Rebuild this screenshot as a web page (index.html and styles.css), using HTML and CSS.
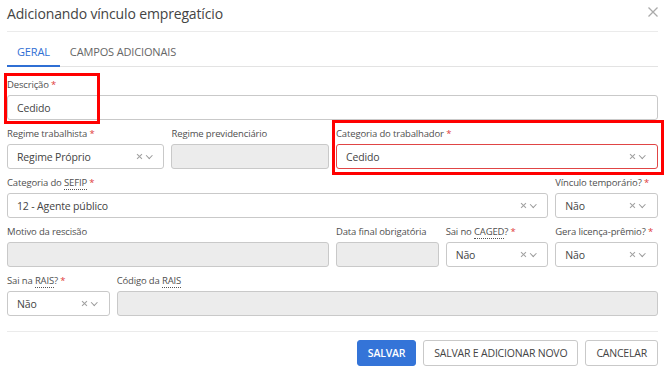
FILE: index.html
```html
<html><head>
<title>Adicionando vínculo empregatício</title>
<link rel="stylesheet" href="styles.css">
</head><body>

<div class="modal">
<div class="head">
<div class="title">Adicionando vínculo empregatício</div>
<svg class="close" width="10" height="10" viewBox="0 0 10 10"><path d="M0.5 0.5L9.5 9.5M9.5 0.5L0.5 9.5" stroke="#aaa" stroke-width="1.3"/></svg>
</div>

<div class="tabs">
<div class="tab active">GERAL</div>
<div class="tab">CAMPOS ADICIONAIS</div>
</div>

<div class="form">
<div class="field c12"><label>Descrição <b>*</b></label><div class="box">Cedido</div></div>

<div class="field c3"><label>Regime trabalhista <b>*</b></label><div class="box sel"><span>Regime Próprio</span><i class="x"></i><i class="dd"></i></div></div>
<div class="field c3"><label>Regime previdenciário</label><div class="box off"></div></div>
<div class="field c6"><label>Categoria do trabalhador <b>*</b></label><div class="box sel err"><span>Cedido</span><i class="x"></i><i class="dd"></i></div></div>

<div class="field c10"><label>Categoria do <abbr>SEFIP</abbr> <b>*</b></label><div class="box sel"><span>12 - Agente público</span><i class="x"></i><i class="dd"></i></div></div>
<div class="field c2"><label>Vínculo temporário? <b>*</b></label><div class="box sel"><span>Não</span><i class="x"></i><i class="dd"></i></div></div>

<div class="field c6"><label>Motivo da rescisão</label><div class="box off"></div></div>
<div class="field c2"><label>Data final obrigatória</label><div class="box off"></div></div>
<div class="field c2"><label>Sai no <abbr>CAGED</abbr>? <b>*</b></label><div class="box sel"><span>Não</span><i class="x"></i><i class="dd"></i></div></div>
<div class="field c2"><label>Gera licença-prêmio? <b>*</b></label><div class="box sel"><span>Não</span><i class="x"></i><i class="dd"></i></div></div>

<div class="field c2"><label>Sai na <abbr>RAIS</abbr>? <b>*</b></label><div class="box sel"><span>Não</span><i class="x"></i><i class="dd"></i></div></div>
<div class="field c10"><label>Código da <abbr>RAIS</abbr></label><div class="box off"></div></div>
</div>

<div class="foot">
<div class="btn primary">SALVAR</div>
<div class="btn">SALVAR E ADICIONAR NOVO</div>
<div class="btn">CANCELAR</div>
</div>
</div>

<div class="mark mark1"></div>
<div class="mark mark2"></div>
</body></html>
```

FILE: styles.css
```css
body{margin:0;background:#fff;font-family:"Open Sans",sans-serif;color:#444;}
.modal{padding:0 10px 0 7px;}

.head{display:flex;align-items:center;justify-content:space-between;height:31px;border-bottom:1px solid #ebebeb;}
.title{font-size:14px;letter-spacing:-0.15px;color:#444;padding-bottom:5px;}
.close{margin-bottom:7px;}

.tabs{display:flex;border-bottom:1px solid #e3e3e3;}
.tab{padding:12px 10px 5px;font-size:11px;letter-spacing:-0.15px;line-height:16px;color:#666;border-bottom:2px solid transparent;margin-bottom:-1px;}
.tab.active{color:#2f6fd4;border-bottom-color:#2f6fd4;}

.form{display:grid;grid-template-columns:repeat(12,1fr);gap:7px;padding:11px 0 15px;border-bottom:1px solid #ebebeb;}
.c2{grid-column:span 2;}
.c3{grid-column:span 3;}
.c6{grid-column:span 6;}
.c10{grid-column:span 10;}
.c12{grid-column:span 12;}
.field{display:flex;flex-direction:column;min-width:0;}
label{font-size:9.5px;letter-spacing:-0.15px;line-height:14px;color:#4f4f4f;margin-bottom:3px;white-space:nowrap;}
label b{color:#e03a3a;font-weight:normal;}
abbr{text-decoration:none;border-bottom:1px dotted #555;}

.box{display:flex;align-items:center;height:23px;border:1px solid #c9c9c9;border-radius:3px;padding:0 9px;font-size:10.5px;letter-spacing:-0.15px;color:#444;}
.box span{flex:1;min-width:0;white-space:nowrap;}
.box.off{background:#ececec;}
.box.err{border-color:#e04545;}
.x{position:relative;width:5px;height:5px;margin:0 5px 0 auto;}
.x:before,.x:after{content:'';position:absolute;left:-1px;top:2px;width:7px;height:1px;background:#a0a0a0;transform:rotate(45deg);}
.x:after{transform:rotate(-45deg);}
.dd{width:3.5px;height:3.5px;border-right:1px solid #999;border-bottom:1px solid #999;transform:rotate(45deg);margin:-3px 3px 0 0;}

.foot{display:flex;justify-content:flex-end;gap:7px;padding-top:8px;}
.btn{height:24px;line-height:24px;padding:0 10px;border:1px solid #c9c9c9;border-radius:3px;font-size:10.5px;letter-spacing:-0.2px;color:#444;}
.btn.primary{background:#3474d8;border-color:#3474d8;color:#fff;font-weight:600;}

.mark{position:absolute;border:3px solid #f00;}
.mark1{left:4px;top:73px;width:90px;height:45px;}
.mark2{left:332px;top:120px;width:326px;height:49px;}
```
